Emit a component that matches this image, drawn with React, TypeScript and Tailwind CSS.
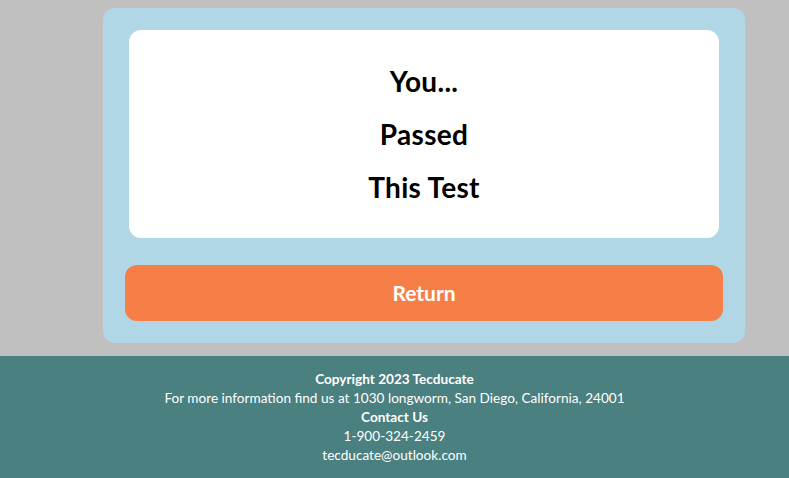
export default function App() {
  const font = { fontFamily: '"Lato", "Open Sans", sans-serif' };
  return (
    <div className="w-[789px] h-[478px] flex flex-col" style={font}>
      <div className="bg-[#c0c0c0] h-[356px] pt-[8px]">
        <div className="ml-[103px] w-[642px] h-[335px] bg-[#b1d7e6] rounded-[12px] pt-[22px] px-[22px] flex flex-col items-center">
          <div className="w-[590px] h-[208px] bg-white rounded-[12px] flex flex-col items-center justify-center gap-[23px] text-black font-bold text-[28px] leading-[30px] tracking-[0.3px]">
            <div>You...</div>
            <div>Passed</div>
            <div>This Test</div>
          </div>
          <button className="mt-[27px] w-[598px] h-[56px] bg-[#f67f48] rounded-[12px] text-white font-bold text-[21px]">
            Return
          </button>
        </div>
      </div>
      <div className="bg-[#4a8080] flex-1 flex flex-col items-center pt-[14px] text-white text-[13.6px] leading-[19px]">
        <div className="font-bold">Copyright 2023 Tecducate</div>
        <div>For more information find us at 1030 longworm, San Diego, California, 24001</div>
        <div className="font-bold">Contact Us</div>
        <div>1-900-324-2459</div>
        <div>tecducate@outlook.com</div>
      </div>
    </div>
  );
}
